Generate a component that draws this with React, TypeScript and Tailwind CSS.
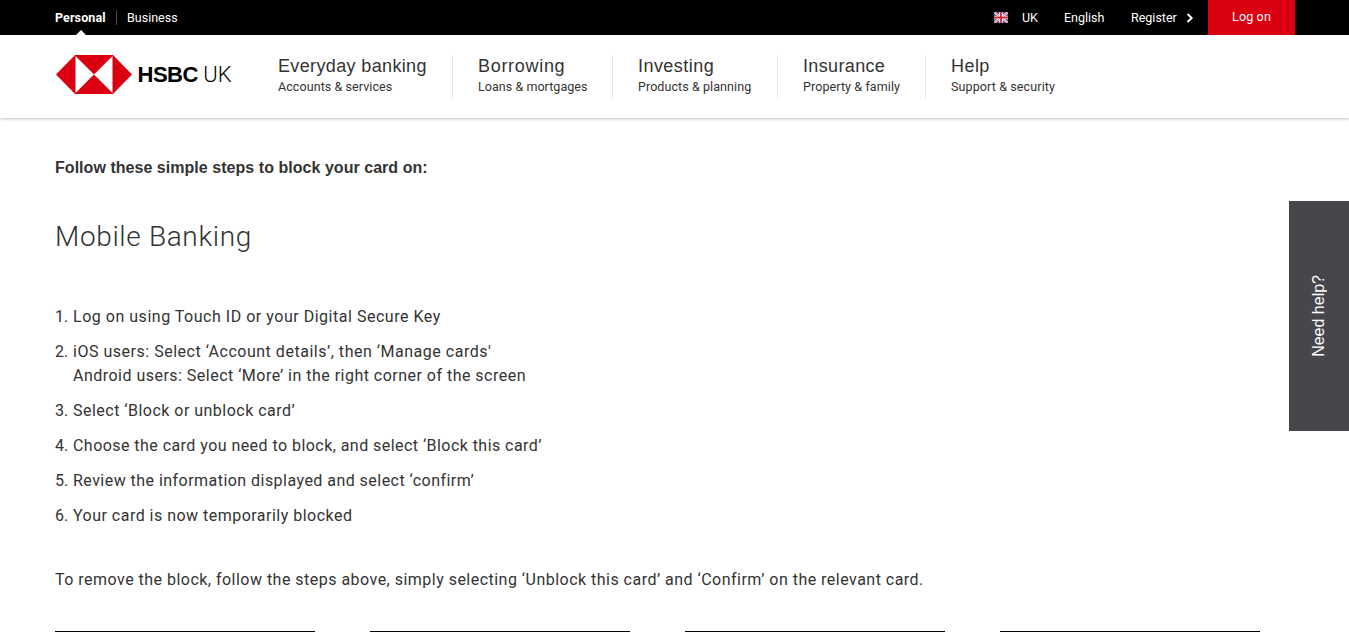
const navItems = [
  { title: "Everyday banking", sub: "Accounts & services", box: "w-[174px]", t: "tracking-[0.36px]", s: "tracking-[0.08px]" },
  { title: "Borrowing", sub: "Loans & mortgages", box: "w-[160px] border-l pl-[25px]", t: "tracking-[0.7px]", s: "tracking-[0.05px]" },
  { title: "Investing", sub: "Products & planning", box: "w-[165px] border-l pl-[25px]", t: "tracking-[0.45px]", s: "tracking-[0.08px]" },
  { title: "Insurance", sub: "Property & family", box: "w-[148px] border-l pl-[25px]", t: "tracking-[0.35px]", s: "tracking-[0.1px]" },
  { title: "Help", sub: "Support & security", box: "w-[160px] border-l pl-[25px]", t: "tracking-[0.45px]", s: "tracking-[0.12px]" },
];

const steps = [
  { lines: [{ text: "Log on using Touch ID or your Digital Secure Key", t: "tracking-[0.52px]" }] },
  {
    lines: [
      { text: "iOS users: Select ‘Account details’, then ‘Manage cards'", t: "tracking-[0.52px]" },
      { text: "Android users: Select ‘More’ in the right corner of the screen", t: "tracking-[0.48px]" },
    ],
  },
  { lines: [{ text: "Select ‘Block or unblock card’", t: "tracking-[0.48px]" }] },
  { lines: [{ text: "Choose the card you need to block, and select ‘Block this card’", t: "tracking-[0.45px]" }] },
  { lines: [{ text: "Review the information displayed and select ‘confirm’", t: "tracking-[0.46px]" }] },
  { lines: [{ text: "Your card is now temporarily blocked", t: "tracking-[0.48px]" }] },
];

function Flag() {
  return (
    <svg width="14" height="11" viewBox="0 0 14 11" className="block">
      <rect width="14" height="11" fill="#34427e" />
      <path d="M0 0L14 11M14 0L0 11" stroke="#f3f0f4" strokeWidth="2.2" />
      <path d="M0 0L14 11M14 0L0 11" stroke="#d8324c" strokeWidth="0.8" />
      <path d="M7 0V11M0 5.5H14" stroke="#fff" strokeWidth="3.6" />
      <path d="M7 0V11M0 5.5H14" stroke="#d3203c" strokeWidth="1.8" />
    </svg>
  );
}

function TopBar() {
  return (
    <div className="flex h-[35px] bg-black text-[12.5px] leading-[35px] text-white">
      <div className="relative ml-[55px] w-[61px] font-bold tracking-[0.1px]">
        <span>Personal</span>
        <svg width="10" height="5" viewBox="0 0 10 5" className="absolute bottom-0 left-[21px]">
          <path d="M0 5L5 0L10 5Z" fill="#fff" />
        </svg>
      </div>
      <div className="mt-[10px] h-[15px] w-px bg-[#4a4a4a]" />
      <div className="ml-[10px]">Business</div>
      <div className="ml-auto flex">
        <div className="mt-[12px] w-[28px]">
          <Flag />
        </div>
        <div className="w-[42px]">UK</div>
        <div className="w-[67px]">English</div>
        <div className="w-[55px]">Register</div>
        <svg width="8" height="10" viewBox="0 0 8 10" className="mt-[13px] mr-[14px]">
          <path d="M1.5 1L5.7 5L1.5 9" stroke="#fff" strokeWidth="1.9" fill="none" />
        </svg>
        <div className="mr-[54px] w-[87px] bg-[#db0011] text-center leading-[34px] tracking-[0.15px]">Log on</div>
      </div>
    </div>
  );
}

function Logo() {
  return (
    <div className="flex h-[39px] w-[223px] items-center pl-px">
      <svg width="76" height="39" viewBox="0 0 76 39" className="shrink-0">
        <path d="M0 19.5L19 0H57L76 19.5L57 39H19Z" fill="#db0011" />
        <path d="M19.5 1L56.5 38V1L19.5 38Z" fill="#fff" />
      </svg>
      <div className="ml-[5.5px] flex font-['Liberation_Sans',sans-serif] text-[22px] leading-[39px] text-black">
        <span className="font-bold tracking-[-0.5px]">HSBC</span>
        <span className="ml-[5.5px] font-['Roboto',sans-serif] font-light">UK</span>
      </div>
    </div>
  );
}

function Header() {
  return (
    <header className="flex h-[83px] border-b border-white pt-5 pl-[55px] shadow-[0_1px_3px_rgba(0,0,0,0.25)]">
      <Logo />
      <nav className="flex">
        {navItems.map((n) => (
          <div key={n.title} className={`${n.box} h-[43px] border-[#e8e8e8] whitespace-nowrap`}>
            <div className={`font-['Liberation_Sans',sans-serif] text-[18px] leading-[22px] ${n.t}`}>{n.title}</div>
            <div className={`text-[12.5px] leading-5 ${n.s}`}>{n.sub}</div>
          </div>
        ))}
      </nav>
    </header>
  );
}

export default function App() {
  return (
    <div className="relative h-[632px] w-[1349px] overflow-hidden bg-white font-['Roboto','Liberation_Sans',sans-serif] text-[#333]">
      <TopBar />
      <Header />
      <main className="pl-[55px]">
        <p className="pt-[38px] font-['Liberation_Sans',sans-serif] text-[16px] leading-6 font-bold tracking-[0.04px]">
          Follow these simple steps to block your card on:
        </p>
        <h2 className="mt-[39px] text-[28px] leading-[36px] font-light tracking-[0.65px]">Mobile Banking</h2>
        <ol className="mt-[50px] flex flex-col gap-[11px] text-[16px] leading-6">
          {steps.map((s, i) => (
            <li key={i} className="flex whitespace-nowrap">
              <span className="w-[18px]">{i + 1}.</span>
              <div>
                {s.lines.map((l) => (
                  <div key={l.text} className={l.t}>
                    {l.text}
                  </div>
                ))}
              </div>
            </li>
          ))}
        </ol>
        <p className="mt-10 text-[16px] leading-6 tracking-[0.48px]">
          To remove the block, follow the steps above, simply selecting ‘Unblock this card’ and ‘Confirm’ on the relevant card.
        </p>
        <div className="mt-[39px] flex gap-[55px]">
          {[0, 1, 2, 3].map((i) => (
            <div key={i} className="h-px w-[260px] bg-black" />
          ))}
        </div>
      </main>
      <button className="absolute top-[201px] right-0 flex h-[230px] w-[60px] items-center justify-center bg-[#47464b] text-white">
        <span className="rotate-180 font-['Liberation_Sans',sans-serif] text-[16px] leading-5 [writing-mode:vertical-rl]">Need help?</span>
      </button>
    </div>
  );
}
